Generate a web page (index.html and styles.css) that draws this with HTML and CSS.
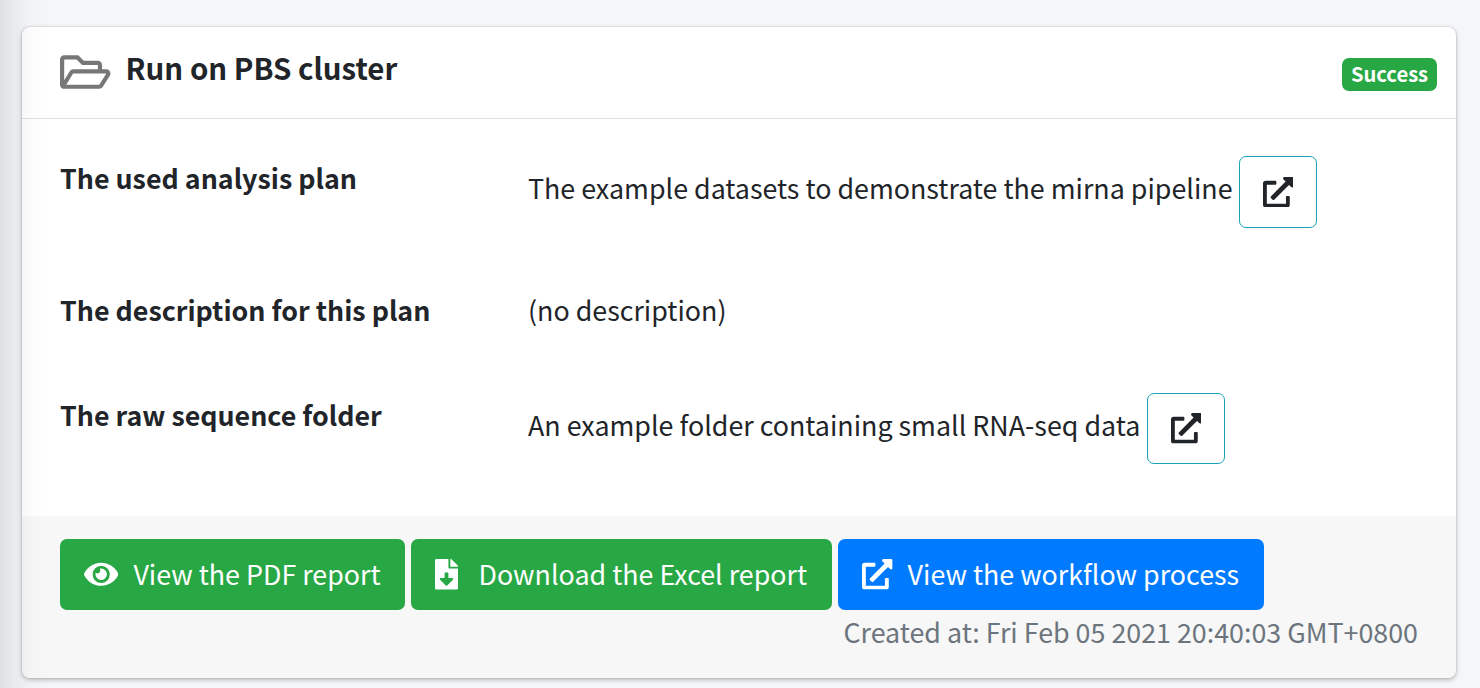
FILE: index.html
```html
<!DOCTYPE html>
<html lang="en">
<head>
<meta charset="utf-8">
<title>Run on PBS cluster</title>
<link rel="stylesheet" href="styles.css">
</head>
<body>
<svg class="defs" aria-hidden="true">
  <symbol id="open" viewBox="0 0 512 512"><path d="M432,320H400a16,16,0,0,0-16,16V448H64V128H208a16,16,0,0,0,16-16V80a16,16,0,0,0-16-16H48A48,48,0,0,0,0,112V464a48,48,0,0,0,48,48H400a48,48,0,0,0,48-48V336A16,16,0,0,0,432,320ZM488,0h-128c-21.37,0-32.05,25.91-17,41l35.73,35.73L135,320.37a24,24,0,0,0,0,34L157.67,377a24,24,0,0,0,34,0L435.28,133.32,471,169c15,15,41,4.5,41-17V24A24,24,0,0,0,488,0Z"/></symbol>
</svg>
<main class="card">
  <header class="card-header">
    <svg class="folder" viewBox="0 64 576 384"><path d="M527.9 224H480v-48c0-26.5-21.5-48-48-48H272l-64-64H48C21.5 64 0 85.5 0 112v288c0 26.5 21.5 48 48 48h400c16.5 0 31.9-8.5 40.7-22.6l79.9-128c20-31.9-3-73.4-40.7-73.4zM48 118c0-3.3 2.7-6 6-6h134.1l64 64H426c3.3 0 6 2.7 6 6v42H152c-16.8 0-32.4 8.8-41.1 23.2L48 351.4zm400 282H72l77.2-128H528z"/></svg>
    <h1 class="title">Run on PBS cluster</h1>
    <span class="badge">Success</span>
  </header>
  <dl class="card-body">
    <dt class="label">The used analysis plan</dt>
    <dd class="value"><span>The example datasets to demonstrate the mirna pipeline</span><a class="btn btn-outline btn-tall"><svg class="icon"><use href="#open"/></svg></a></dd>
    <dt class="label">The description for this plan</dt>
    <dd class="value value-plain">(no description)</dd>
    <dt class="label">The raw sequence folder</dt>
    <dd class="value"><span>An example folder containing small RNA-seq data</span><a class="btn btn-outline"><svg class="icon"><use href="#open"/></svg></a></dd>
  </dl>
  <footer class="card-footer">
    <div class="actions">
      <a class="btn btn-success btn-pdf"><svg class="icon icon-eye" viewBox="0 0 576 512"><path d="M572.52 241.4C518.29 135.59 410.93 64 288 64S57.68 135.64 3.48 241.41a32.35 32.35 0 0 0 0 29.19C57.71 376.41 165.07 448 288 448s230.32-71.64 284.52-177.41a32.35 32.35 0 0 0 0-29.19zM288 400a144 144 0 1 1 144-144 143.93 143.93 0 0 1-144 144zm0-240a95.31 95.31 0 0 0-25.31 3.79 47.85 47.85 0 0 1-66.9 66.9A95.78 95.78 0 1 0 288 160z"/></svg><span>View the PDF report</span></a>
      <a class="btn btn-success btn-excel"><svg class="icon icon-file" viewBox="0 0 384 512"><path d="M224 136V0H24C10.7 0 0 10.7 0 24v464c0 13.3 10.7 24 24 24h336c13.3 0 24-10.7 24-24V160H248c-13.2 0-24-10.8-24-24zm76.45 211.36l-96.42 95.7c-6.65 6.61-17.39 6.61-24.04 0l-96.42-95.7C73.42 337.29 80.54 320 94.82 320H160v-80c0-8.84 7.16-16 16-16h32c8.84 0 16 7.16 16 16v80h65.18c14.28 0 21.4 17.29 11.27 27.36zM377 105L279.1 7c-4.5-4.5-10.6-7-17-7H256v128h128v-6.1c0-6.3-2.5-12.4-7-16.9z"/></svg><span>Download the Excel report</span></a>
      <a class="btn btn-primary"><svg class="icon"><use href="#open"/></svg><span>View the workflow process</span></a>
    </div>
    <p class="created">Created at: Fri Feb 05 2021 20:40:03 GMT+0800</p>
  </footer>
</main>
<div class="edge-shade"></div>
</body>
</html>
```
FILE: styles.css
```css
* { box-sizing: border-box; }
body {
  position: relative;
  margin: 0;
  height: 688px;
  padding: 27px 24px 10px 22px;
  overflow: hidden;
  background: #f4f6f9;
  color: #212529;
  font: 26.84px/44px "Noto Sans CJK SC", "Noto Sans", sans-serif;
}
.defs { display: none; }
svg { fill: currentColor; flex: none; }
.card {
  display: flex;
  flex-direction: column;
  height: 651px;
  border-radius: 8px;
  background: #fff;
  box-shadow: 0 0 2px rgba(0,0,0,.2), 0 2px 5px rgba(0,0,0,.24);
}
.card-header {
  display: flex;
  align-items: flex-start;
  height: 92px;
  padding: 0 19px 0 38px;
  border-bottom: 1px solid #dfdfdf;
}
.folder { width: 50.5px; height: 34px; margin-top: 28px; color: #777; }
.title { margin: 17px 0 0 15px; font-size: 29.45px; font-weight: 700; line-height: 46px; }
.badge {
  margin: 31px 0 0 auto;
  width: 95px;
  height: 33px;
  border-radius: 7px;
  background: #28a745;
  color: #fff;
  font-size: 20.2px;
  font-weight: 700;
  line-height: 32px;
  text-align: center;
}
.card-body {
  display: grid;
  grid-template-columns: 468px 1fr;
  grid-template-rows: 132px 105px 1fr;
  flex: 1;
  margin: 0;
  padding: 37px 0 0 38px;
}
.label { font-weight: 700; font-size: 26.8px; }
.value { display: flex; gap: 6.4px; align-items: flex-start; margin: 0; line-height: 64px; }
.value-plain { line-height: 44px; }
.btn {
  display: flex;
  align-items: center;
  height: 71px;
  padding: 0 24px;
  border-radius: 7px;
  line-height: 36px;
  white-space: nowrap;
}
.btn-outline { width: 78.4px; border: 1px solid #17a2b8; padding: 0 22.8px; }
.btn-tall { height: 72px; }
.btn-success { background: #28a745; color: #fff; }
.btn-primary { width: 426px; background: #007bff; color: #fff; }
.btn-pdf { width: 345px; }
.btn-excel { width: 421px; }
.icon { width: 30.6px; height: 30.6px; }
.icon-eye { width: 34.4px; }
.icon-file { width: 23px; }
.btn .icon + span { margin-left: 15px; padding-bottom: 2px; }
.btn .icon-file + span { margin-left: 20.5px; }
.card-footer { height: 162px; padding: 23px 38px 0; border-radius: 0 0 8px 8px; background: #f7f7f7; }
.actions { display: flex; gap: 6px; }
.created { margin: 0; color: #6c757d; text-align: right; }
.edge-shade {
  position: absolute;
  inset: 0 auto 0 0;
  width: 48px;
  background: linear-gradient(90deg, rgba(0,0,0,.085), rgba(0,0,0,.045) 35%, rgba(0,0,0,.012) 65%, transparent);
}
```
